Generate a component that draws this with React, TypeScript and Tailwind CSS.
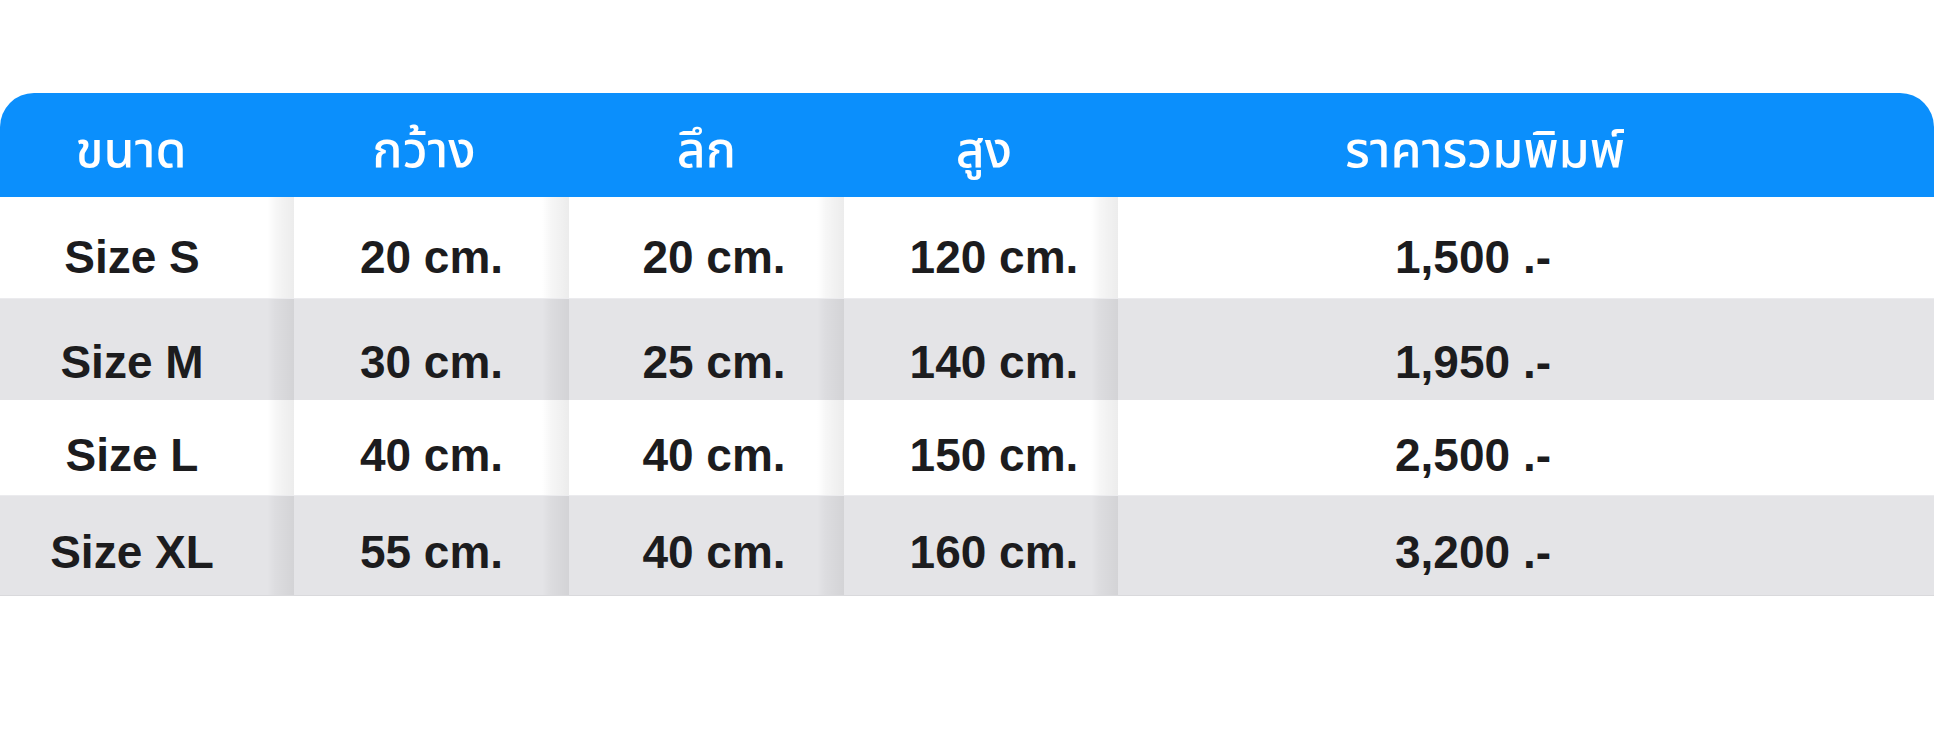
const COLS = 'grid grid-cols-[294px_275px_275px_274px_1fr]'

const HEAD = [
  { label: 'ขนาด', pad: 'pr-[32px]' },
  { label: 'กว้าง', pad: 'pr-[15px]' },
  { label: 'ลึก', pad: '' },
  { label: 'สูง', pad: 'pl-[6px]' },
  { label: 'ราคารวมพิมพ์', pad: 'pr-[82px]' },
]

// horizontal nudges so each column's text sits where the picture has it
const CELL_PAD = ['pr-[30px]', '', 'pl-[15px]', 'pl-[26px]', 'pr-[106px]']

const ROWS = [
  { cells: ['Size S', '20 cm.', '20 cm.', '120 cm.', '1,500 .-'], h: 'h-[101px]', pt: 'pt-[19px]', grey: false },
  { cells: ['Size M', '30 cm.', '25 cm.', '140 cm.', '1,950 .-'], h: 'h-[102px]', pt: 'pt-[24px]', grey: true },
  { cells: ['Size L', '40 cm.', '40 cm.', '150 cm.', '2,500 .-'], h: 'h-[95px]', pt: 'pt-[15px]', grey: false },
  { cells: ['Size XL', '55 cm.', '40 cm.', '160 cm.', '3,200 .-'], h: 'h-[100px]', pt: 'pt-[12px]', grey: true },
]

const SEP =
  'bg-[linear-gradient(90deg,transparent_calc(100%_-_27px),rgba(0,0,0,0.035)_calc(100%_-_18px),rgba(0,0,0,0.075)_100%)]'

export default function App() {
  return (
    <div className="w-[1934px] h-[743px] bg-white pt-[93px] font-['Liberation_Sans',Arial,sans-serif]">
      {/* header */}
      <div className={`${COLS} h-[104px] bg-[#0b8ffc] rounded-t-[34px] text-white`}>
        {HEAD.map((h) => (
          <div
            key={h.label}
            className={`flex items-center justify-center pt-[14px] ${h.pad} font-['Noto_Sans_Thai','Noto_Sans',sans-serif] font-medium text-[50px] leading-none`}
          >
            {h.label}
          </div>
        ))}
      </div>

      {/* body */}
      <div className="border-b border-[#d9d9dc]">
        {ROWS.map((row, r) => (
          <div
            key={r}
            className={`${COLS} ${row.h} ${row.grey ? 'bg-[#e4e4e7] border-t border-[#ebebee]' : 'bg-white'}`}
          >
            {row.cells.map((c, i) => (
              <div
                key={i}
                className={`flex items-center justify-center ${row.pt} ${CELL_PAD[i]} ${i < 4 ? SEP : ''} text-[46px] font-bold text-[#1c1c1e] leading-none`}
              >
                {c}
              </div>
            ))}
          </div>
        ))}
      </div>
    </div>
  )
}
